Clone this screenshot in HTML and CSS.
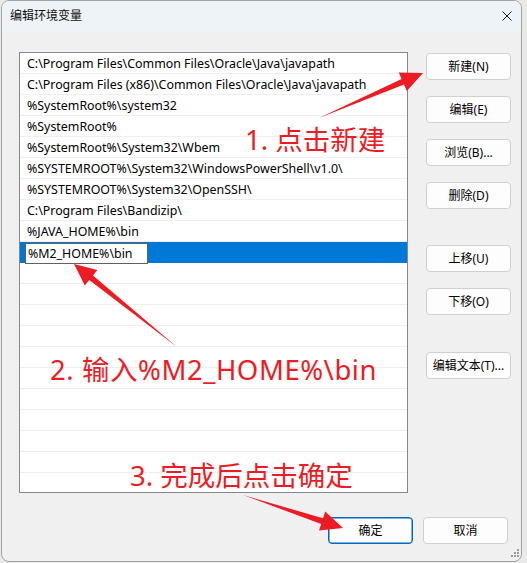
FILE: index.html
```html
<!DOCTYPE html>
<html lang="zh-CN">
<head>
<meta charset="utf-8">
<title>编辑环境变量</title>
<link rel="stylesheet" href="styles.css">
</head>
<body>
<div class="window">
  <div class="titlebar">
    <span class="title">编辑环境变量</span>
    <svg class="close" width="10" height="10" viewBox="0 0 10 10"><path d="M0.5 0.5 L9.5 9.5 M9.5 0.5 L0.5 9.5" stroke="#1a1a1a" stroke-width="1" fill="none"/></svg>
  </div>
  <div class="main">
    <div class="list">
      <div class="row">C:\Program Files\Common Files\Oracle\Java\javapath</div>
      <div class="row">C:\Program Files (x86)\Common Files\Oracle\Java\javapath</div>
      <div class="row">%SystemRoot%\system32</div>
      <div class="row">%SystemRoot%</div>
      <div class="row">%SystemRoot%\System32\Wbem</div>
      <div class="row">%SYSTEMROOT%\System32\WindowsPowerShell\v1.0\</div>
      <div class="row">%SYSTEMROOT%\System32\OpenSSH\</div>
      <div class="row">C:\Program Files\Bandizip\</div>
      <div class="row">%JAVA_HOME%\bin</div>
      <div class="row selected"><span class="edit">%M2_HOME%\bin</span></div>
      <div class="row"></div>
      <div class="row"></div>
      <div class="row"></div>
      <div class="row"></div>
      <div class="row"></div>
      <div class="row"></div>
      <div class="row"></div>
      <div class="row"></div>
      <div class="row"></div>
      <div class="row"></div>
      <div class="row"></div>
    </div>
    <div class="side">
      <button class="btn">新建(N)</button>
      <button class="btn">编辑(E)</button>
      <button class="btn">浏览(B)...</button>
      <button class="btn">删除(D)</button>
      <button class="btn move-up">上移(U)</button>
      <button class="btn">下移(O)</button>
      <button class="btn edit-text">编辑文本(T)...</button>
    </div>
  </div>
  <div class="footer">
    <button class="btn primary">确定</button>
    <button class="btn">取消</button>
  </div>
  <svg class="grip" width="12" height="12" viewBox="0 0 12 12">
    <rect x="9" y="1" width="2" height="2" fill="#9a9a9a"/>
    <rect x="6" y="4" width="2" height="2" fill="#9a9a9a"/>
    <rect x="9" y="4" width="2" height="2" fill="#9a9a9a"/>
    <rect x="3" y="7" width="2" height="2" fill="#9a9a9a"/>
    <rect x="6" y="7" width="2" height="2" fill="#9a9a9a"/>
    <rect x="9" y="7" width="2" height="2" fill="#9a9a9a"/>
  </svg>
</div>
<div class="annotations">
  <svg class="arrows" width="527" height="563" viewBox="0 0 527 563">
    <polygon points="319,118 404,84.5 406.8,90.9 423,73 398.8,72.5 401.6,79" fill="#ed1c24"/>
    <polygon points="177,347 93,275.5 97.4,270 74,264 84.8,285.6 89.2,280.1" fill="#ed1c24"/>
    <polygon points="243,495 321.2,524 319,530.6 343,528 325.2,511.6 323,518.3" fill="#ed1c24"/>
  </svg>
  <div class="note note1">1. 点击新建</div>
  <div class="note note2">2. 输入%M2_HOME%\bin</div>
  <div class="note note3">3. 完成后点击确定</div>
</div>
</body>
</html>
```

FILE: styles.css
```css
* { box-sizing: border-box; }

html, body {
  margin: 0;
  padding: 0;
}

body {
  width: 527px;
  height: 563px;
  background: #e9e9e9;
  font-family: "Noto Sans", "Noto Sans CJK SC", sans-serif;
  font-size: 12px;
  color: #000;
  position: relative;
  overflow: hidden;
}

.window {
  position: relative;
  margin-left: 1px;
  width: 521px;
  height: 562px;
  border: 1px solid #a3a3a3;
  border-radius: 8px;
  background: #f0f0f0;
  overflow: hidden;
  display: flex;
  flex-direction: column;
}

.titlebar {
  height: 30px;
  flex: none;
  background: #eef3f8;
  display: flex;
  align-items: center;
  justify-content: space-between;
  padding: 0 9px 0 8px;
}

.title {
  font-size: 12px;
  color: #111;
  line-height: 14px;
}

.close { display: block; }

.main {
  display: flex;
  padding: 21px 0 0 17px;
}

.list {
  width: 389px;
  height: 441px;
  background: #fff;
  border: 1px solid #828790;
  overflow: hidden;
  flex: none;
}

.row {
  height: 21px;
  border-bottom: 1px solid #efefef;
  padding: 1px 0 0 7px;
  font-size: 12.4px;
  line-height: 20px;
  white-space: nowrap;
  display: flex;
  align-items: flex-start;
}

.row.selected {
  background: #0078d7;
  border-bottom-color: #0078d7;
  padding: 0 0 0 5px;
  overflow: visible;
}

.edit {
  margin-top: 1px;
  width: 123px;
  height: 21px;
  background: #fff;
  border: 1px solid #5f5f5f;
  padding-left: 2px;
  line-height: 19px;
  position: relative;
  z-index: 1;
}

.side {
  margin-left: 18px;
  display: flex;
  flex-direction: column;
  padding-top: 1px;
  gap: 16px;
}

.btn {
  width: 85px;
  height: 27px;
  margin: 0;
  padding: 0;
  background: #fdfdfd;
  border: 1px solid #d0d0d0;
  border-radius: 4px;
  font-family: "Noto Sans", "Noto Sans CJK SC", sans-serif;
  font-size: 12px;
  color: #000;
  line-height: 25px;
  text-align: center;
}

.move-up { margin-top: 20px; }
.edit-text { margin-top: 21px; }

.footer {
  display: flex;
  justify-content: flex-end;
  gap: 10px;
  padding-right: 13px;
  margin-top: 24px;
}

.btn.primary {
  border: 1px solid #0067c0;
  box-shadow: inset 0 0 0 0.5px #0067c0;
}

.grip {
  position: absolute;
  right: 1px;
  bottom: 1px;
}

.annotations {
  position: absolute;
  left: 0;
  top: 0;
  width: 527px;
  height: 563px;
  pointer-events: none;
}

.arrows {
  position: absolute;
  left: 0;
  top: 0;
}

.note {
  position: absolute;
  color: #ed1c24;
  font-size: 27.5px;
  line-height: 28px;
  white-space: nowrap;
  font-family: "Noto Sans", "Noto Sans CJK SC", sans-serif;
}

.note1 { left: 245px; top: 126px; }
.note2 { left: 50px; top: 356px; letter-spacing: 0.55px; }
.note3 { left: 130px; top: 462px; }
```
